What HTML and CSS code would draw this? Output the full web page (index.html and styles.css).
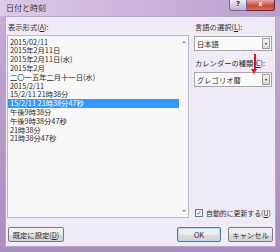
FILE: index.html
```html
<!DOCTYPE html>
<html lang="ja">
<head>
    <meta charset="UTF-8">
    <title>日付と時刻</title>
    <link rel="stylesheet" href="styles.css">
</head>
<body>
    <div class="titlebar">
        <span class="title">日付と時刻</span>
        <span class="caption">
            <span class="cap-help">?</span><span class="cap-close">x</span>
        </span>
    </div>
    <div class="panel">
        <div class="columns">
            <div class="left">
                <div class="label">表示形式(<u>A</u>):</div>
                <div class="listbox">
                    <ul class="items">
                        <li>2015/02/11</li>
                        <li>2015年2月11日</li>
                        <li>2015年2月11日(水)</li>
                        <li>2015年2月</li>
                        <li>二〇一五年二月十一日(水)</li>
                        <li>2015/2/11</li>
                        <li>15/2/11 21時38分</li>
                        <li class="selected">15/2/11 21時38分47秒</li>
                        <li>午後9時38分</li>
                        <li>午後9時38分47秒</li>
                        <li>21時38分</li>
                        <li>21時38分47秒</li>
                    </ul>
                    <div class="scrollbar">
                        <span class="arrow-up"></span>
                        <span class="arrow-down"></span>
                    </div>
                </div>
            </div>
            <div class="right">
                <div class="label">言語の選択(<u>L</u>):</div>
                <div class="dropdown">
                    <span>日本語</span>
                    <span class="drop-btn"></span>
                </div>
                <div class="label label-gap">カレンダーの種類(<u>C</u>):</div>
                <div class="dropdown">
                    <span>グレゴリオ暦</span>
                    <span class="drop-btn"></span>
                </div>
                <div class="red-arrow"></div>
                <div class="auto-update">
                    <span class="checkbox">✓</span>
                    <span class="auto-text">自動的に更新する(<u>U</u>)</span>
                </div>
            </div>
        </div>
        <div class="buttons">
            <span class="btn btn-default">既定に設定(<u>D</u>)</span>
            <span class="btn btn-ok">OK</span>
            <span class="btn btn-cancel">キャンセル</span>
        </div>
    </div>
</body>
</html>
```

FILE: styles.css
```css
* { box-sizing: border-box; }
html { background: #a98dc0; }
body { margin: 0; width: 280px; height: 252px; padding: 0 4px 5px 5px; background: linear-gradient(180deg, #c9b2da 0%, #b79dcb 40%, #a98dc0 100%); font-family: "Noto Sans CJK JP", "DejaVu Sans", sans-serif; font-size: 7.3px; color: #2a2a2a; }
u { text-decoration: underline; text-underline-offset: 1px; }

.titlebar { height: 16px; margin: 0 -4px 0 -5px; padding: 0 5px 0 6px; display: flex; justify-content: space-between; background: linear-gradient(90deg, #dccbe6 0%, #cdb6dc 45%, #b99fcd 100%); }
.title { font-size: 8px; line-height: 16px; color: #3a3040; }
.caption { display: flex; height: 11px; }
.cap-help { width: 18px; height: 11px; line-height: 10px; text-align: center; font: bold 7px "DejaVu Sans", sans-serif; color: #333; background: linear-gradient(180deg, #f1eaf6, #c2aed4); border: 1px solid #7a6690; border-top: 0; border-radius: 0 0 0 3px; }
.cap-close { width: 28px; height: 11px; line-height: 10px; text-align: center; font: bold 7px "DejaVu Sans", sans-serif; color: #fff; background: linear-gradient(180deg, #eba79e, #c9473b 55%, #d56e62); border: 1px solid #6e2a2a; border-top: 0; border-left: 0; border-radius: 0 0 3px 0; }

.panel { height: 231px; background: #f1eaf7; border: 1px solid #b7a6c8; padding: 3px 3px 4px 1px; display: flex; flex-direction: column; }
.columns { display: flex; gap: 5px; }
.left { width: 182px; display: flex; flex-direction: column; }
.label { line-height: 15px; height: 15px; padding-left: 1px; white-space: nowrap; }
.listbox { height: 183px; background: #f8f8f8; border: 1px solid #bdb6c4; display: flex; }
.items { list-style: none; margin: 0; padding: 1.6px 0 0 0; flex: 1; }
.items li { height: 8.8px; line-height: 8.8px; padding-left: 2px; white-space: nowrap; }
.items li.selected { background: #3399ff; color: #fff; }
.scrollbar { width: 9px; display: flex; flex-direction: column; justify-content: space-between; align-items: center; padding: 5px 0 5px; }
.arrow-up { width: 0; height: 0; border-left: 2px solid transparent; border-right: 2px solid transparent; border-bottom: 2px solid #8a8a8a; }
.arrow-down { width: 0; height: 0; border-left: 2px solid transparent; border-right: 2px solid transparent; border-top: 2px solid #8a8a8a; }

.right { width: 78px; position: relative; display: flex; flex-direction: column; }
.label-gap { margin-top: 5px; }
.dropdown { height: 15px; margin-top: 1px; background: #fbfbfb; border: 1px solid #a7a3ab; display: flex; align-items: center; justify-content: space-between; padding-left: 2px; }
.drop-btn { width: 8px; height: 11px; margin-right: 1px; background: linear-gradient(180deg, #f4f4f4, #d8d8d8); border: 1px solid #9c9c9c; position: relative; }
.drop-btn::after { content: ""; position: absolute; left: 1.5px; top: 4px; border-left: 1.5px solid transparent; border-right: 1.5px solid transparent; border-top: 2px solid #222; }
.red-arrow { position: absolute; left: 60px; top: 34px; width: 1.5px; height: 17px; background: #e8141a; }
.red-arrow::after { content: ""; position: absolute; left: -3px; bottom: -3px; border-left: 3.75px solid transparent; border-right: 3.75px solid transparent; border-top: 5px solid #e8141a; }
.auto-update { margin-top: auto; margin-bottom: 1px; display: flex; align-items: center; gap: 3px; height: 9px; padding-left: 1px; white-space: nowrap; }
.auto-text { font-size: 6.9px; }
.checkbox { width: 8px; height: 8px; flex-shrink: 0; border: 1px solid #5f7c9c; background: linear-gradient(180deg, #e6ecf2, #fdfdfd); display: flex; align-items: center; justify-content: center; font: bold 6px "DejaVu Sans", sans-serif; color: #2a4a7a; }

.buttons { margin-top: 9px; display: flex; gap: 7px; padding-left: 1px; }
.btn { height: 15px; display: flex; align-items: center; justify-content: center; background: linear-gradient(180deg, #f4f4f4 0%, #ebebeb 50%, #dcdcdc 51%, #d0d0d0 100%); border: 1px solid #7a7a7a; border-radius: 2px; font-size: 7.3px; }
.btn-default { width: 56px; margin-right: auto; }
.btn-ok { width: 44px; border-color: #3c7fb1; box-shadow: inset 0 0 0 1px #b6d8f0; }
.btn-cancel { width: 45px; margin-right: -1px; }
```
